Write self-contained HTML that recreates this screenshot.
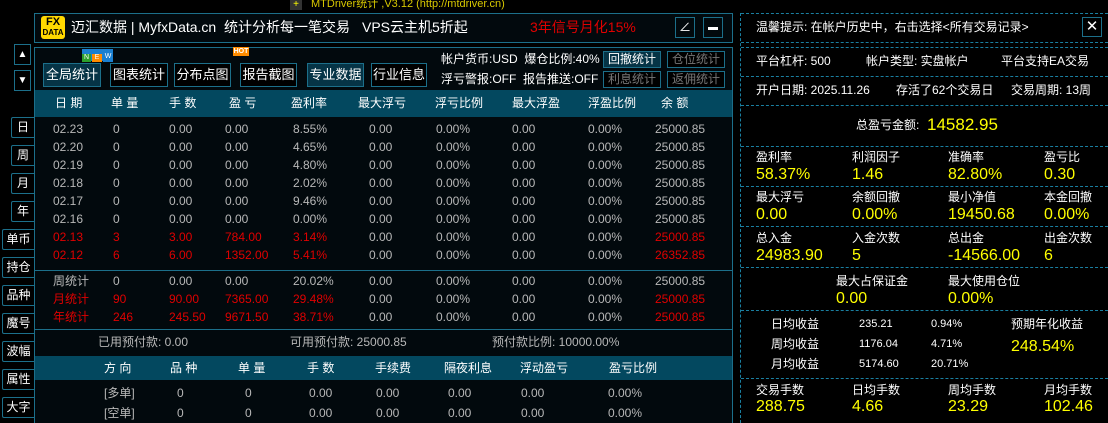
<!DOCTYPE html>
<html><head><meta charset="utf-8"><style>
*{margin:0;padding:0;box-sizing:border-box}
body{width:1108px;height:423px;background:#000;overflow:hidden;position:relative;font-family:"Liberation Sans","Noto Sans CJK SC",sans-serif;font-size:12px;color:#ddd;line-height:15px}
.a{position:absolute;white-space:nowrap}
.g{color:#b8b8b8}.r{color:#e00000}.y{color:#ffff00}.w{color:#fff}
.btn{position:absolute;border:1px solid #1c6f8a;color:#fff;text-align:center;font-size:13px;background:#000}
.lb{position:absolute;border:1px solid #1c6f8a;border-right:none;color:#fff;text-align:center;font-size:12px;background:#000;border-radius:2px 0 0 2px}
.sec{position:absolute;left:741px;width:367px;border-top:1px dashed #1a7fa0}
.lab{font-size:12px;color:#fff}.val{font-size:16px;color:#ffff00;line-height:18px}
</style></head><body>
<div class="a" style="left:290px;top:0;width:12px;height:10px;background:#333;color:#ff0;font-size:10px;line-height:9px;text-align:center">+</div>
<div class="a" style="left:311px;top:-3px;color:#d8c800;font-size:11px">MTDriver统计 ,V3.12 (http://mtdriver.cn)</div>

<div class="a" style="left:34px;top:13px;width:699px;height:30px;border:1px solid #1c6f8a;background:#02090d"></div>
<div class="a" style="left:41px;top:16px;width:24px;height:23px;background:#ffd800;border-radius:3px;color:#000;font-weight:bold;font-size:11px;line-height:10px;text-align:center;padding-top:1px">FX<br><span style="font-size:8px">DATA</span></div>
<div class="a w" style="left:71px;top:19px;font-size:14px;line-height:17px">迈汇数据 | MyfxData.cn &nbsp;统计分析每一笔交易</div>
<div class="a w" style="left:362px;top:19px;font-size:14px;line-height:17px">VPS云主机5折起</div>
<div class="a r" style="left:530px;top:19px;font-size:14px;line-height:17px">3年信号月化15%</div>
<div class="a" style="left:675px;top:17px;width:20px;height:21px;border:1px solid #1c6f8a;color:#fff;text-align:center;font-size:12px;line-height:19px">∠</div>
<div class="a" style="left:703px;top:17px;width:20px;height:21px;border:1px solid #1c6f8a"><div style="margin:9px 4px;height:3px;background:#fff"></div></div>

<div class="a" style="left:34px;top:47px;width:699px;height:376px;border:1px solid #1c6f8a;border-bottom:none;background:#02090d"></div>
<div class="a" style="left:82px;top:49px;width:31px;height:12px;background:#1a7fd0"></div>
<div class="a" style="left:82px;top:54px;width:9px;height:8px;background:#2ca02c;color:#fff;font-size:7px;text-align:center;line-height:8px">N</div>
<div class="a" style="left:92px;top:54px;width:10px;height:8px;background:#ff8c00;color:#fff;font-size:7px;text-align:center;line-height:8px">E</div>
<div class="a" style="left:103px;top:49px;width:10px;height:13px;background:#1a7fd0;color:#fff;font-size:7px;text-align:center;line-height:16px">W</div>
<div class="a" style="left:233px;top:47px;width:16px;height:9px;background:#ff8c00;color:#fff;font-size:7px;text-align:center;line-height:9px;font-weight:bold">HOT</div>
<div class="btn" style="left:43px;top:63px;width:58px;height:24px;line-height:22px;background:#063446">全局统计</div>
<div class="btn" style="left:110px;top:63px;width:58px;height:24px;line-height:22px">图表统计</div>
<div class="btn" style="left:174px;top:63px;width:57px;height:24px;line-height:22px">分布点图</div>
<div class="btn" style="left:240px;top:63px;width:57px;height:24px;line-height:22px">报告截图</div>
<div class="btn" style="left:307px;top:63px;width:57px;height:24px;line-height:22px;background:#063446">专业数据</div>
<div class="btn" style="left:371px;top:63px;width:56px;height:24px;line-height:22px">行业信息</div>
<div class="a w" style="left:441px;top:52px;font-size:12px">帐户货币:USD &nbsp;爆仓比例:40%</div>
<div class="a w" style="left:441px;top:72px;font-size:12px">浮亏警报:OFF &nbsp;报告推送:OFF</div>
<div class="btn" style="left:603px;top:51px;width:58px;height:17px;line-height:15px;font-size:12px;background:#063446">回撤统计</div>
<div class="btn" style="left:667px;top:51px;width:58px;height:17px;line-height:15px;font-size:12px;color:#777">仓位统计</div>
<div class="btn" style="left:603px;top:71px;width:58px;height:17px;line-height:15px;font-size:12px;color:#777">利息统计</div>
<div class="btn" style="left:667px;top:71px;width:58px;height:17px;line-height:15px;font-size:12px;color:#777">返佣统计</div>

<div class="a" style="left:14px;top:44px;width:17px;height:21px;border:1px solid #1c6f8a;color:#fff;font-size:10px;text-align:center;line-height:19px">▲</div>
<div class="a" style="left:14px;top:70px;width:17px;height:21px;border:1px solid #1c6f8a;color:#fff;font-size:10px;text-align:center;line-height:19px">▼</div>
<div class="lb" style="left:11px;top:117px;width:23px;height:21px;line-height:19px">日</div>
<div class="lb" style="left:11px;top:145px;width:23px;height:21px;line-height:19px">周</div>
<div class="lb" style="left:11px;top:173px;width:23px;height:21px;line-height:19px">月</div>
<div class="lb" style="left:11px;top:201px;width:23px;height:21px;line-height:19px">年</div>
<div class="lb" style="left:2px;top:229px;width:32px;height:21px;line-height:19px">单币</div>
<div class="lb" style="left:2px;top:257px;width:32px;height:21px;line-height:19px">持仓</div>
<div class="lb" style="left:2px;top:285px;width:32px;height:21px;line-height:19px">品种</div>
<div class="lb" style="left:2px;top:313px;width:32px;height:21px;line-height:19px">魔号</div>
<div class="lb" style="left:2px;top:341px;width:32px;height:21px;line-height:19px">波幅</div>
<div class="lb" style="left:2px;top:369px;width:32px;height:21px;line-height:19px">属性</div>
<div class="lb" style="left:2px;top:397px;width:32px;height:21px;line-height:19px">大字</div>

<div class="a" style="left:35px;top:90px;width:697px;height:27px;background:#03485f"></div>
<div class="a w" style="top:96px;left:0;font-size:12px">
<span class="a" style="left:55px">日 期</span><span class="a" style="left:111px">单 量</span><span class="a" style="left:169px">手 数</span><span class="a" style="left:229px">盈 亏</span><span class="a" style="left:291px">盈利率</span><span class="a" style="left:358px">最大浮亏</span><span class="a" style="left:435px">浮亏比例</span><span class="a" style="left:512px">最大浮盈</span><span class="a" style="left:588px">浮盈比例</span><span class="a" style="left:661px">余 额</span>
</div>
<div id="rows"></div>
<div class="a" style="left:35px;top:270px;width:697px;height:1px;background:#1c6f8a"></div>
<div class="a" style="left:35px;top:329px;width:697px;height:1px;background:#1c6f8a"></div>
<div class="a g" style="left:98px;top:335px">已用预付款: 0.00</div>
<div class="a g" style="left:290px;top:335px">可用预付款: 25000.85</div>
<div class="a g" style="left:492px;top:335px">预付款比例: 10000.00%</div>
<div class="a" style="left:35px;top:356px;width:697px;height:24px;background:#03485f"></div>
<div class="a w" style="left:0;top:361px">
<span class="a" style="left:104px">方 向</span><span class="a" style="left:170px">品 种</span><span class="a" style="left:238px">单 量</span><span class="a" style="left:307px">手 数</span><span class="a" style="left:375px">手续费</span><span class="a" style="left:444px">隔夜利息</span><span class="a" style="left:520px">浮动盈亏</span><span class="a" style="left:609px">盈亏比例</span>
</div>
<div class="a g" style="left:0;top:386px">
<span class="a" style="left:104px">[多单]</span><span class="a" style="left:177px">0</span><span class="a" style="left:245px">0</span><span class="a" style="left:309px">0.00</span><span class="a" style="left:376px">0.00</span><span class="a" style="left:448px">0.00</span><span class="a" style="left:521px">0.00</span><span class="a" style="left:608px">0.00%</span>
</div>
<div class="a g" style="left:0;top:406px">
<span class="a" style="left:104px">[空单]</span><span class="a" style="left:177px">0</span><span class="a" style="left:245px">0</span><span class="a" style="left:309px">0.00</span><span class="a" style="left:376px">0.00</span><span class="a" style="left:448px">0.00</span><span class="a" style="left:521px">0.00</span><span class="a" style="left:608px">0.00%</span>
</div>

<div class="a" style="left:740px;top:13px;width:1px;height:410px;border-left:1px dashed #1a7fa0"></div>
<div class="sec" style="top:13px"></div>
<div class="a w" style="left:756px;top:20px">温馨提示: 在帐户历史中，右击选择&lt;所有交易记录&gt;</div>
<div class="a" style="left:1082px;top:17px;width:20px;height:20px;border:1px solid #1c6f8a;color:#fff;text-align:center;font-size:15px;line-height:18px">✕</div>
<div class="sec" style="top:42px"></div>
<div class="sec" style="top:47px"></div>
<div class="a w" style="left:756px;top:54px">平台杠杆: 500</div>
<div class="a w" style="left:866px;top:54px">帐户类型: 实盘帐户</div>
<div class="a w" style="left:1001px;top:54px">平台支持EA交易</div>
<div class="sec" style="top:76px"></div>
<div class="a w" style="left:756px;top:83px">开户日期: 2025.11.26</div>
<div class="a w" style="left:896px;top:83px">存活了62个交易日</div>
<div class="a w" style="left:1011px;top:83px">交易周期: 13周</div>
<div class="sec" style="top:105px"></div>
<div class="a w" style="left:856px;top:118px">总盈亏金额:</div>
<div class="a y" style="left:927px;top:115px;font-size:17px;line-height:19px">14582.95</div>
<div class="sec" style="top:146px"></div>
<div id="grid"></div>
<div class="sec" style="top:186px"></div>
<div class="sec" style="top:226px"></div>
<div class="sec" style="top:267px"></div>
<div class="a lab" style="left:836px;top:274px">最大占保证金</div><div class="a val" style="left:836px;top:290px">0.00</div>
<div class="a lab" style="left:948px;top:274px">最大使用仓位</div><div class="a val" style="left:948px;top:290px">0.00%</div>
<div class="sec" style="top:310px"></div>
<div class="a w" style="left:771px;top:317px">日均收益</div><div class="a w" style="left:859px;top:317px;font-size:11px">235.21</div><div class="a w" style="left:931px;top:317px;font-size:11px">0.94%</div>
<div class="a w" style="left:771px;top:337px">周均收益</div><div class="a w" style="left:859px;top:337px;font-size:11px">1176.04</div><div class="a w" style="left:931px;top:337px;font-size:11px">4.71%</div>
<div class="a w" style="left:771px;top:357px">月均收益</div><div class="a w" style="left:859px;top:357px;font-size:11px">5174.60</div><div class="a w" style="left:931px;top:357px;font-size:11px">20.71%</div>
<div class="a w" style="left:1011px;top:317px">预期年化收益</div>
<div class="a y" style="left:1011px;top:338px;font-size:16px;line-height:18px">248.54%</div>
<div class="sec" style="top:378px"></div>
<div class="a lab" style="left:756px;top:383px">交易手数</div><div class="a val" style="left:756px;top:398px">288.75</div>
<div class="a lab" style="left:852px;top:383px">日均手数</div><div class="a val" style="left:852px;top:398px">4.66</div>
<div class="a lab" style="left:948px;top:383px">周均手数</div><div class="a val" style="left:948px;top:398px">23.29</div>
<div class="a lab" style="left:1044px;top:383px">月均手数</div><div class="a val" style="left:1044px;top:398px">102.46</div>

<script>
var rows=[
["02.23","0","0.00","0.00","8.55%","25000.85",0],
["02.20","0","0.00","0.00","4.65%","25000.85",0],
["02.19","0","0.00","0.00","4.80%","25000.85",0],
["02.18","0","0.00","0.00","2.02%","25000.85",0],
["02.17","0","0.00","0.00","9.46%","25000.85",0],
["02.16","0","0.00","0.00","0.00%","25000.85",0],
["02.13","3","3.00","784.00","3.14%","25000.85",1],
["02.12","6","6.00","1352.00","5.41%","26352.85",1]];
var xs=[53,113,169,225,293,369,436,512,588,655],h="";
function row(r,y,red){var v=[r[0],r[1],r[2],r[3],r[4],"0.00","0.00%","0.00","0.00%",r[5]];
for(var i=0;i<10;i++){var c=(red&&(i<5||i==9))?"r":"g";h+='<div class="a '+c+'" style="left:'+xs[i]+'px;top:'+y+'px">'+v[i]+'</div>';}}
rows.forEach(function(r,k){row(r,122+k*18,r[6])});
row(["周统计","0","0.00","0.00","20.02%","25000.85"],274,0);
row(["月统计","90","90.00","7365.00","29.48%","25000.85"],292,1);
row(["年统计","246","245.50","9671.50","38.71%","25000.85"],310,1);
document.getElementById("rows").innerHTML=h;
var g=[[150,["盈利率","58.37%"],["利润因子","1.46"],["准确率","82.80%"],["盈亏比","0.30"]],
[190,["最大浮亏","0.00"],["余额回撤","0.00%"],["最小净值","19450.68"],["本金回撤","0.00%"]],
[231,["总入金","24983.90"],["入金次数","5"],["总出金","-14566.00"],["出金次数","6"]]],s="",gx=[756,852,948,1044];
g.forEach(function(r){for(var i=0;i<4;i++){s+='<div class="a lab" style="left:'+gx[i]+'px;top:'+r[0]+'px">'+r[i+1][0]+'</div><div class="a val" style="left:'+gx[i]+'px;top:'+(r[0]+16)+'px">'+r[i+1][1]+'</div>';}});
document.getElementById("grid").innerHTML=s;
</script>
</body></html>
